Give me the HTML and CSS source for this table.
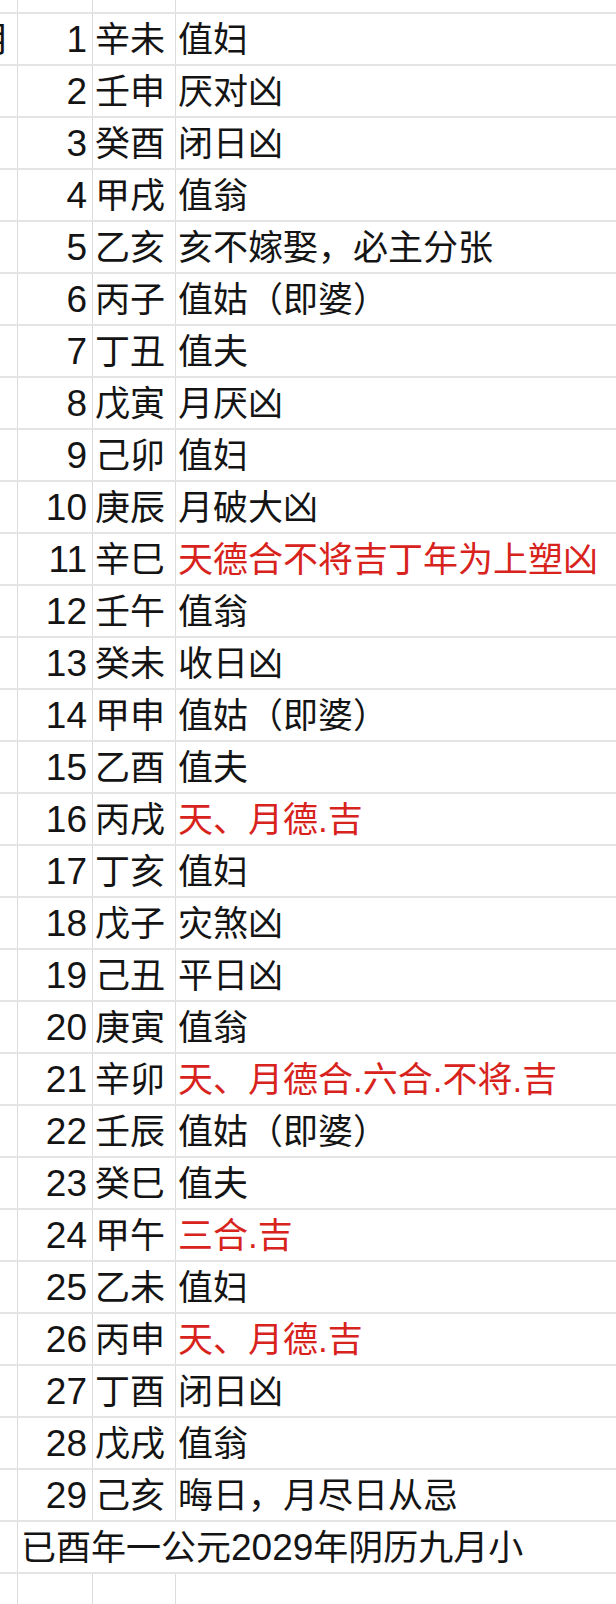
FILE: index.html
```html
<!DOCTYPE html>
<html lang="zh-CN">
<head>
<meta charset="utf-8">
<title>阴历九月</title>
<link rel="stylesheet" href="styles.css">
</head>
<body>
<div class="sheet">
  <div class="row top"><div class="c a"></div><div class="c b"></div><div class="c g"></div><div class="c t"></div></div>
  <div class="row"><div class="c a"><span class="cut">月</span></div><div class="c b">1</div><div class="c g">辛未</div><div class="c t">值妇</div></div>
  <div class="row"><div class="c a"></div><div class="c b">2</div><div class="c g">壬申</div><div class="c t">厌对凶</div></div>
  <div class="row"><div class="c a"></div><div class="c b">3</div><div class="c g">癸酉</div><div class="c t">闭日凶</div></div>
  <div class="row"><div class="c a"></div><div class="c b">4</div><div class="c g">甲戌</div><div class="c t">值翁</div></div>
  <div class="row"><div class="c a"></div><div class="c b">5</div><div class="c g">乙亥</div><div class="c t">亥不嫁娶，必主分张</div></div>
  <div class="row"><div class="c a"></div><div class="c b">6</div><div class="c g">丙子</div><div class="c t">值姑（即婆）</div></div>
  <div class="row"><div class="c a"></div><div class="c b">7</div><div class="c g">丁丑</div><div class="c t">值夫</div></div>
  <div class="row"><div class="c a"></div><div class="c b">8</div><div class="c g">戊寅</div><div class="c t">月厌凶</div></div>
  <div class="row"><div class="c a"></div><div class="c b">9</div><div class="c g">己卯</div><div class="c t">值妇</div></div>
  <div class="row"><div class="c a"></div><div class="c b">10</div><div class="c g">庚辰</div><div class="c t">月破大凶</div></div>
  <div class="row"><div class="c a"></div><div class="c b">11</div><div class="c g">辛巳</div><div class="c t red">天德合不将吉丁年为上塑凶</div></div>
  <div class="row"><div class="c a"></div><div class="c b">12</div><div class="c g">壬午</div><div class="c t">值翁</div></div>
  <div class="row"><div class="c a"></div><div class="c b">13</div><div class="c g">癸未</div><div class="c t">收日凶</div></div>
  <div class="row"><div class="c a"></div><div class="c b">14</div><div class="c g">甲申</div><div class="c t">值姑（即婆）</div></div>
  <div class="row"><div class="c a"></div><div class="c b">15</div><div class="c g">乙酉</div><div class="c t">值夫</div></div>
  <div class="row"><div class="c a"></div><div class="c b">16</div><div class="c g">丙戌</div><div class="c t red">天、月德.吉</div></div>
  <div class="row"><div class="c a"></div><div class="c b">17</div><div class="c g">丁亥</div><div class="c t">值妇</div></div>
  <div class="row"><div class="c a"></div><div class="c b">18</div><div class="c g">戊子</div><div class="c t">灾煞凶</div></div>
  <div class="row"><div class="c a"></div><div class="c b">19</div><div class="c g">己丑</div><div class="c t">平日凶</div></div>
  <div class="row"><div class="c a"></div><div class="c b">20</div><div class="c g">庚寅</div><div class="c t">值翁</div></div>
  <div class="row"><div class="c a"></div><div class="c b">21</div><div class="c g">辛卯</div><div class="c t red">天、月德合.六合.不将.吉</div></div>
  <div class="row"><div class="c a"></div><div class="c b">22</div><div class="c g">壬辰</div><div class="c t">值姑（即婆）</div></div>
  <div class="row"><div class="c a"></div><div class="c b">23</div><div class="c g">癸巳</div><div class="c t">值夫</div></div>
  <div class="row"><div class="c a"></div><div class="c b">24</div><div class="c g">甲午</div><div class="c t red">三合.吉</div></div>
  <div class="row"><div class="c a"></div><div class="c b">25</div><div class="c g">乙未</div><div class="c t">值妇</div></div>
  <div class="row"><div class="c a"></div><div class="c b">26</div><div class="c g">丙申</div><div class="c t red">天、月德.吉</div></div>
  <div class="row"><div class="c a"></div><div class="c b">27</div><div class="c g">丁酉</div><div class="c t">闭日凶</div></div>
  <div class="row"><div class="c a"></div><div class="c b">28</div><div class="c g">戊戌</div><div class="c t">值翁</div></div>
  <div class="row"><div class="c a"></div><div class="c b">29</div><div class="c g">己亥</div><div class="c t">晦日，月尽日从忌</div></div>
  <div class="row"><div class="c a"></div><div class="c span">已酉年一公元<span class="num">2029</span>年阴历九月小</div></div>
  <div class="row bottom"><div class="c a"></div><div class="c b"></div><div class="c g"></div><div class="c t"></div></div>
</div>
</body>
</html>
```
FILE: styles.css
```css
html, body {
  margin: 0;
  padding: 0;
  background: #ffffff;
}
body {
  width: 616px;
  height: 1604px;
  overflow: hidden;
  font-family: "Liberation Sans", "Noto Sans CJK SC", sans-serif;
  font-size: 35px;
  color: #141414;
}
.sheet {
  display: flex;
  flex-direction: column;
}
.row {
  display: grid;
  grid-template-columns: 18px 75px 83px 1fr;
  height: 52px;
  box-sizing: border-box;
  border-bottom: 2px solid #e4e4e4;
}
.row.top {
  height: 14px;
}
.row.bottom {
  height: 40px;
  border-bottom: none;
}
.c {
  display: flex;
  align-items: center;
  box-sizing: border-box;
  white-space: nowrap;
  overflow: hidden;
  line-height: 1;
}
.a, .b, .g {
  border-right: 1px solid #dcdcdc;
}
.b {
  justify-content: flex-end;
  padding-right: 5px;
  font-size: 37px;
}
.num {
  font-size: 37px;
}
.g {
  padding-left: 2px;
}
.t {
  padding-left: 2px;
}
.span {
  grid-column: 2 / 5;
  padding-left: 3px;
  overflow: visible;
}
.cut {
  margin-left: -25px;
}
.red {
  color: #d8231d;
}
```
